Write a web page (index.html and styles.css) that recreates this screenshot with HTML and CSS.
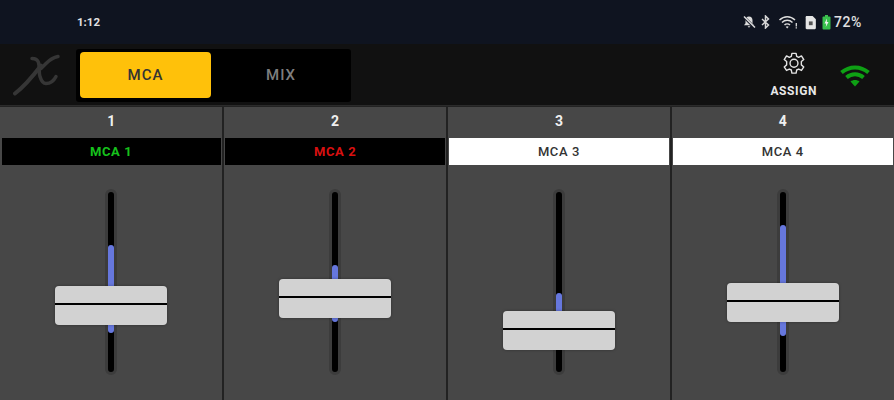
FILE: index.html
```html
<!DOCTYPE html>
<html lang="en">

<head>
    <meta charset="UTF-8">
    <title>MCA</title>
    <link rel="stylesheet" href="styles.css">
</head>

<body>
    <div class="status-bar">
        <span class="time">1:12</span>
        <div class="status-icons">
            <svg width="14" height="14" viewBox="0 0 14 14"><path d="M7 1.500c-2.200 0-3.500 1.600-3.500 3.800v3L2 10.200h10l-1.500-1.900v-3C10.500 3.100 9.200 1.500 7 1.500zM5.600 11.200h2.800L7 12.800z" fill="#dcdcdc"/><path d="M2 2l10.500 10.500" stroke="#0f1420" stroke-width="2.600"/><path d="M2 1.500l11 11" stroke="#dcdcdc" stroke-width="1.500"/></svg>
            <svg width="9" height="14" viewBox="0 0 9 14"><path d="M1 4l6.500 6L4.500 13V1l3 3L1 10" fill="none" stroke="#d6d6d6" stroke-width="1.500"/></svg>
            <svg class="status-wifi" width="20" height="14" viewBox="0 0 19 14"><path d="M1 5c4.500-4.400 11-4.400 15.500 0M3.500 7.500c3-2.900 7.500-2.900 10.500 0M6 10c1.500-1.400 4-1.400 5.500 0" fill="none" stroke="#dcdcdc" stroke-width="1.500"/><path d="M8.700 13.500l-1.500-1.800c.9-.7 2.100-.7 3 0z" fill="#dcdcdc"/><path d="M17.800 8v3.500M17.800 12.300v1.200" stroke="#dcdcdc" stroke-width="1.300"/></svg>
            <svg class="status-sd" width="13" height="15" viewBox="0 0 12 14"><path d="M2.500 1H8l3 3v8.200c0 .6-.4 1-1 1H2.500c-.6 0-1-.4-1-1V2c0-.6.4-1 1-1z" fill="#e6e6e6"/><rect x="4.500" y="6" width="3.500" height="3.500" fill="#555"/></svg>
            <svg width="9" height="15" viewBox="0 0 9 15"><rect x="3" y="0" width="3" height="2" fill="#3fbf4f"/><rect x="0.500" y="1.500" width="8" height="13" rx="1" fill="#38c04c"/><path d="M5 3.500L2.500 8.500h1.700L3.800 12 6.500 7H4.800z" fill="#f2f2f2"/></svg>
            <span class="battery">72%</span>
        </div>
    </div>

    <div class="toolbar">
        <svg class="logo" width="48" height="44" viewBox="0 0 48 44">
            <path d="M2 39.500C12 32 20 22 28 11.500" fill="none" stroke="#363636" stroke-width="4" stroke-linecap="round"/>
            <path d="M19 4.500c3 0 5.500 1 6.500 4 1.500 5 0 10 1.500 14 1.500 5 3.500 7 6 7 4 0 8-3 10-7" fill="none" stroke="#363636" stroke-width="3.500" stroke-linecap="round"/>
            <path d="M45 2.500c-5 1-9 4-12 7l-5 5" fill="none" stroke="#363636" stroke-width="3.500" stroke-linecap="round"/>
        </svg>
        <div class="tabs">
            <div class="tab tab-active">MCA</div>
            <div class="tab">MIX</div>
        </div>
        <div class="toolbar-right">
            <div class="assign">
                <svg width="28" height="26" viewBox="0 0 24 22.300"><path d="M10.200 2h3.600l.5 2.700 1.700.8 2.400-1.300 2 3.100-2.100 1.700v2.900l2.100 1.800-2 3-2.400-1.200-1.700.8-.5 2.700h-3.600l-.5-2.700-1.700-.8-2.400 1.200-2-3 2.100-1.800V9l-2.100-1.700 2-3.100L8 5.500l1.700-.8z" fill="none" stroke="#e4e4e4" stroke-width="1.200" stroke-linejoin="round"/><circle cx="12" cy="10.500" r="3.400" fill="none" stroke="#e4e4e4" stroke-width="1.200"/></svg>
                <span class="assign-label">ASSIGN</span>
            </div>
            <svg class="wifi" width="32" height="24" viewBox="0 0 32 24"><path d="M2.500 9.500c8-6.800 19-6.800 27 0M7.500 14.500c5-4.200 12-4.200 17 0" fill="none" stroke="#0ea014" stroke-width="4"/><path d="M16 23.500l-4.500-5c2.700-2 6.300-2 9 0z" fill="#0ea014"/></svg>
        </div>
    </div>

    <div class="strips">
        <div class="strip">
            <div class="strip-num">1</div>
            <div class="strip-name name-green">MCA 1</div>
            <div class="fader">
                <div class="track">
                    <div class="fill" style="top: 53px; height: 88px"></div>
                </div>
                <div class="knob" style="top: 121px"></div>
            </div>
        </div>
        <div class="strip">
            <div class="strip-num">2</div>
            <div class="strip-name name-red">MCA 2</div>
            <div class="fader">
                <div class="track">
                    <div class="fill" style="top: 73px; height: 57px"></div>
                </div>
                <div class="knob" style="top: 114px"></div>
            </div>
        </div>
        <div class="strip">
            <div class="strip-num">3</div>
            <div class="strip-name name-white">MCA 3</div>
            <div class="fader">
                <div class="track">
                    <div class="fill" style="top: 101px; height: 40px"></div>
                </div>
                <div class="knob" style="top: 146px"></div>
            </div>
        </div>
        <div class="strip">
            <div class="strip-num">4</div>
            <div class="strip-name name-white">MCA 4</div>
            <div class="fader">
                <div class="track">
                    <div class="fill" style="top: 33px; height: 111px"></div>
                </div>
                <div class="knob" style="top: 118px"></div>
            </div>
        </div>
    </div>
</body>

</html>
```

FILE: styles.css
```css
body {
    margin: 0;
    width: 894px;
    height: 400px;
    overflow: hidden;
    background: #474747;
    font-family: "Roboto", "Liberation Sans", sans-serif;
    display: flex;
    flex-direction: column;
}

.status-bar {
    height: 44px;
    background: #0f1420;
    display: flex;
    justify-content: space-between;
    align-items: center;
    padding: 0 32px 0 77px;
    color: #e0e0e0;
    font-size: 11.5px;
    font-weight: 700;
}

.status-icons {
    display: flex;
    align-items: center;
    gap: 5px;
}

.status-wifi {
    margin-left: 3px;
}

.status-sd {
    margin-left: 1px;
}

.battery {
    margin-left: -2px;
    font-size: 14px;
    font-weight: 500;
    letter-spacing: 0.6px;
}

.toolbar {
    height: 61px;
    background: #111111;
    display: flex;
    align-items: center;
    padding-left: 13px;
}

.logo {
    margin-right: 15px;
    margin-top: 2px;
}

.tabs {
    width: 275px;
    height: 53px;
    padding: 3px 0 4px 4px;
    box-sizing: border-box;
    margin-top: 2px;
    background: #000000;
    border-radius: 3px;
    display: flex;
}

.tab {
    flex: 1;
    display: flex;
    justify-content: center;
    align-items: center;
    font-size: 15px;
    font-weight: 500;
    letter-spacing: 1px;
    color: #7e7e7e;
}

.tab-active {
    flex: 0 0 131px;
    background: #ffc10a;
    border-radius: 4px;
    color: #333333;
}

.toolbar-right {
    margin-left: auto;
    display: flex;
    align-items: center;
    gap: 22px;
    padding-right: 23px;
}

.assign {
    display: flex;
    flex-direction: column;
    align-items: center;
    gap: 7px;
    color: #e8e8e8;
}

.assign-label {
    font-size: 12px;
    font-weight: 700;
    letter-spacing: 0.6px;
}

.wifi {
    margin-top: 1px;
}

.strips {
    flex: 1;
    display: flex;
    background: #222222;
    gap: 1.5px;
    padding-top: 1px;
    border-top: 1px solid #2b2b2b;
    box-sizing: border-box;
}

.strip {
    flex: 1;
    background: #474747;
    display: flex;
    flex-direction: column;
    min-width: 0;
}

.strip-num {
    height: 31px;
    padding-bottom: 3px;
    box-sizing: border-box;
    display: flex;
    justify-content: center;
    align-items: center;
    color: #f0f0f0;
    font-size: 14px;
    font-weight: 700;
}

.strip-name {
    height: 27px;
    margin: 0 1.5px;
    display: flex;
    justify-content: center;
    align-items: center;
    font-size: 13px;
    font-weight: 500;
    letter-spacing: 0.6px;
}

.name-green {
    background: #000000;
    color: #16c21c;
    font-weight: 700;
}

.name-red {
    background: #000000;
    color: #d81010;
    font-weight: 700;
}

.name-white {
    background: #ffffff;
    color: #333333;
}

.fader {
    position: relative;
    flex: 1;
    display: flex;
    justify-content: center;
}

.track {
    position: absolute;
    top: 24px;
    width: 6px;
    height: 180px;
    background: #000000;
    border: 3px solid #3c3c3c;
    border-radius: 6px;
}

.fill {
    position: absolute;
    left: 0;
    width: 6px;
    background: #6677dd;
    border-radius: 3px;
}

.knob {
    position: absolute;
    width: 112px;
    height: 39px;
    left: 50%;
    margin-left: -56px;
    box-sizing: border-box;
    background: linear-gradient(#d2d2d2 0 17.5px, #000000 17.5px 19px, #d2d2d2 19px);
    border-radius: 4px;
    box-shadow: 0 0 3px rgba(0, 0, 0, 0.35);
}
```
